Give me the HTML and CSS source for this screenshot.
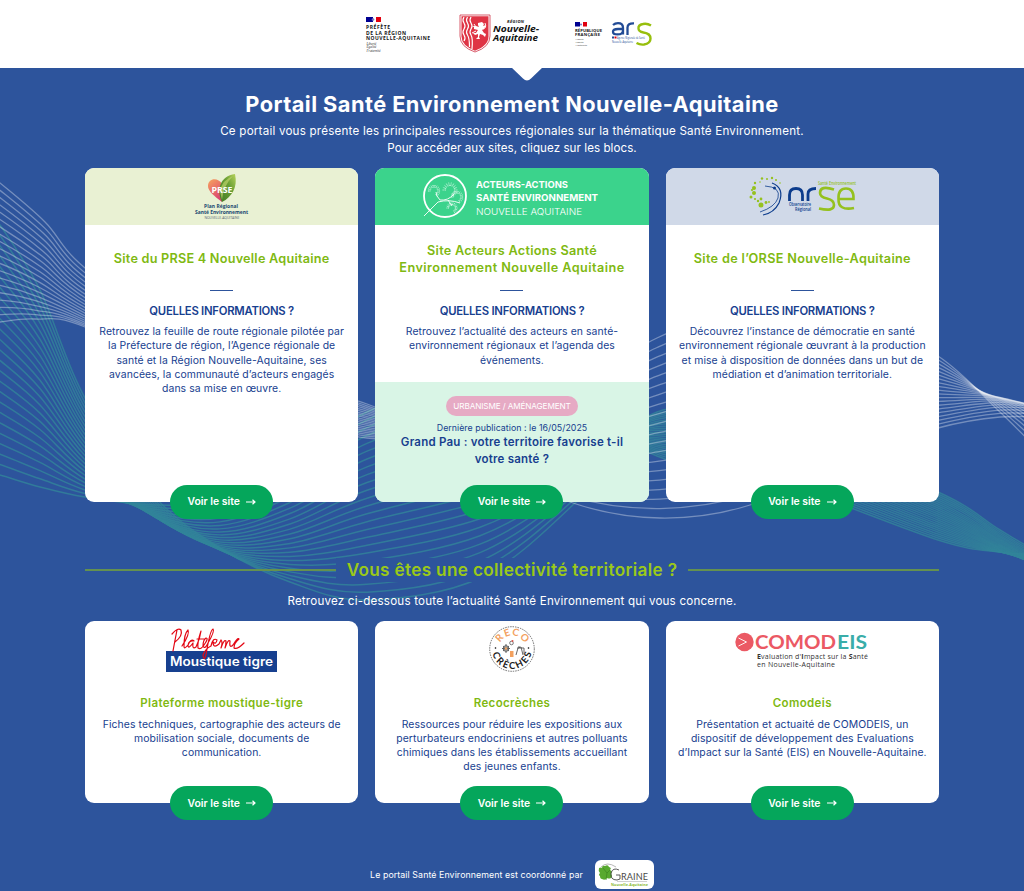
FILE: index.html
```html
<!DOCTYPE html>
<html lang="fr">
<head>
<meta charset="utf-8">
<title>Portail Santé Environnement Nouvelle-Aquitaine</title>
<link rel="stylesheet" href="styles.css">
</head>
<body>
<svg class="waves" viewBox="0 0 1024 891" aria-hidden="true"><g id="waves-teal"></g><g id="waves-white"></g></svg>
<header class="top">
<svg class="partners" viewBox="352 0 320 68" role="img">
  <path fill="#000091" d="M366 17h7v5h-7z"/><path fill="#e1000f" d="M376 17h5v5h-5z"/><circle cx="373" cy="19.5" r="1.3" fill="#7777c5"/>
  <g class="marianne"><text x="366" y="28.700" textLength="24">PRÉFÈTE</text><text x="366" y="34.700" textLength="40">DE LA RÉGION</text><text x="366" y="40.200" textLength="64">NOUVELLE-AQUITAINE</text></g>
  <g class="motto"><text x="366.5" y="44.5">Liberté</text><text x="366.5" y="48.2">Égalité</text><text x="366.5" y="51.8">Fraternité</text></g>
  <path d="M460 15h30v21q0 11-15 16q-15-5-15-16z" fill="#fff" stroke="#cf3347" stroke-width=".8"/>
  <path d="M461.5 16.3h27v20q0 9.5-13.5 14.4q-13.500-5-13.500-14.400z" fill="#df3445"/>
  <path d="M464 17q-2 3 0 6t0 6t0 6t0 6M467.500 17q-2 3 0 6t0 6t0 6t2 12M471 17q-2 3 0 6t0 6t0 6t1 14" fill="none" stroke="#fff" stroke-width="1.200"/>
  <path d="M478 23l4-1 2 2-1 2 3-1-2 4-2 1 2 3 2 1-1 3-2-2-3-1-1 3 1 2-4 0 2-2 0-3-3 1-2-2 3 0 2-3-4-1 0-2-2-1 4 0 3 1-1-2z" fill="#fff"/><path d="M483 29q4-1 2-6M476 27l-2-3m2 7-4 2" stroke="#fff" fill="none"/>
  <g class="region"><text x="507" y="23.300" class="region-top" textLength="17">RÉGION</text><text x="493" y="31.500" textLength="46" lengthAdjust="spacingAndGlyphs">Nouvelle-</text><text x="493" y="40.800" textLength="45" lengthAdjust="spacingAndGlyphs">Aquitaine</text></g>
  <path fill="#000091" d="M575 22h5v4.500h-5z"/><path fill="#e1000f" d="M583 22h4v4.500h-4z"/><circle cx="581" cy="24.500" r="1" fill="#7777c5"/>
  <g class="marianne small"><text x="575" y="31.600" textLength="27">RÉPUBLIQUE</text><text x="575" y="36" textLength="25">FRANÇAISE</text></g>
  <g class="motto tiny"><text x="575.500" y="40">Liberté</text><text x="575.500" y="43">Égalité</text><text x="575.500" y="46">Fraternité</text></g>
  <g fill="none" stroke="#224b96" stroke-width="2.300"><path d="M613 25q2-1.800 5-1.800q5 0 5 4.500v6.800M623 29h-5q-5 0-5 2.700t4.500 2.700q5.500 0 5.500-4M627.500 35v-7.500q0-4.500 6.500-4.200"/></g>
  <path d="M651 25.500q-4-2.500-8-1.500q-5 1-4.500 4.500q0 3 5 4q7 1 7 6t-6.500 6q-4 .5-7.500-1.500" fill="none" stroke="#97bf0d" stroke-width="2.400"/>
  <path fill="#224b96" d="M612 36.500h2v2h-2z"/><path fill="#e1000f" d="M614.500 36.500h2v2h-2z"/>
  <g class="ars"><text x="617" y="38.500" textLength="28" lengthAdjust="spacingAndGlyphs">Agence Régionale de Santé</text><text x="612" y="42.700" textLength="21" lengthAdjust="spacingAndGlyphs">Nouvelle-Aquitaine</text></g>
</svg>
<svg class="notch" viewBox="0 0 32 14"><path d="M0 0H32L20 11.500Q16 15.500 12 11.500Z" fill="#fff"/></svg>
</header>
<main class="wrap">
<h1>Portail Santé Environnement Nouvelle-Aquitaine</h1>
<p class="intro"><span class="intro-a">Ce portail vous présente les principales ressources régionales sur la thématique Santé Environnement.</span><br><span class="intro-b">Pour accéder aux sites, cliquez sur les blocs.</span></p>
<section class="grid">
 <article class="card tall">
  <div class="banner prse"><svg class="logo" viewBox="175 168 94 57"><defs><linearGradient id="heart" x2=".5" y2="1"><stop stop-color="#f7a45e"/><stop offset="1" stop-color="#db4371"/></linearGradient><linearGradient id="leaf" x1="1" x2="0" y2="1"><stop stop-color="#b7d45b"/><stop offset=".4" stop-color="#6b9f35"/><stop offset="1" stop-color="#3f7a25"/></linearGradient></defs><path d="M222 202C214 196 208 191 208 186C208 178 218 177 222 184Z" fill="url(#heart)"/><path d="M222 202C216 190 220 176 235 174C238 187 232 197 222 202Z" fill="url(#leaf)"/><path d="M222 200Q223 186 233 176Q222 180 220 191Z" fill="#bad26a" opacity=".7"/><text x="211.500" y="193" textLength="21" lengthAdjust="spacingAndGlyphs" class="prse-mark">PRSE</text><g class="prse-name"><text x="204" y="208.300" textLength="34">Plan Régional</text><text x="195" y="214" textLength="53">Santé Environnement</text></g><text x="204.500" y="218.700" textLength="35" class="prse-sub">NOUVELLE-AQUITAINE</text></svg></div>
  <div class="body"><h2 class="single t1">Site du PRSE 4 Nouvelle Aquitaine</h2><hr><h3>QUELLES INFORMATIONS ?</h3>
  <p>Retrouvez la feuille de route régionale pilotée par<br>la Préfecture de région, l’Agence régionale de<br>santé et la Région Nouvelle-Aquitaine, ses<br>avancées, la communauté d’acteurs engagés<br>dans sa mise en œuvre.</p></div>
  <a class="btn">Voir le site <svg viewBox="0 0 10 8"><path d="M0 4H9M6.500 1.700L9 4L6.500 6.300"/></svg></a>
 </article>
 <article class="card tall">
  <div class="banner acteurs"><svg class="logo wide" viewBox="412 168 200 57"><circle cx="445" cy="196" r="21" fill="none" stroke="#fff" stroke-width="1.800"/><path d="M424 216L438 202M438 202Q449 199 460 203M440 200Q436 196 436 192M440 200Q448 201 454 194M448 200L452 206" fill="none" stroke="#fff" stroke-width=".9"/><g id="umbels"></g><g class="aa"><text x="476" y="188" textLength="92" lengthAdjust="spacingAndGlyphs">ACTEURS-ACTIONS</text><text x="476" y="201.300" textLength="122" lengthAdjust="spacingAndGlyphs">SANTÉ ENVIRONNEMENT</text><text x="476" y="214.700" textLength="106" lengthAdjust="spacingAndGlyphs" class="light">NOUVELLE AQUITAINE</text></g></svg></div>
  <div class="body"><h2><span class="t2">Site Acteurs Actions Santé</span><br><span class="t3">Environnement Nouvelle Aquitaine</span></h2><hr><h3>QUELLES INFORMATIONS ?</h3>
  <p>Retrouvez l’actualité des acteurs en santé-<br>environnement régionaux et l’agenda des<br>événements.</p></div>
  <div class="news"><span class="tag">URBANISME / AMÉNAGEMENT</span><span class="date">Dernière publication : le 16/05/2025</span><strong>Grand Pau : votre territoire favorise t-il<br>votre santé ?</strong></div>
  <a class="btn">Voir le site <svg viewBox="0 0 10 8"><path d="M0 4H9M6.500 1.700L9 4L6.500 6.300"/></svg></a>
 </article>
 <article class="card tall">
  <div class="banner orse"><svg class="logo wide" viewBox="702 168 200 57"><g fill="#95c11f"><circle cx="761" cy="199" r="1.400"/><circle cx="754" cy="193" r="2"/><circle cx="751" cy="197" r="1.500"/><circle cx="754" cy="188" r="2"/><circle cx="755" cy="183" r="1.200"/><circle cx="762" cy="178.500" r="1.200"/><circle cx="767" cy="179" r="1"/><circle cx="772" cy="178" r="1.200"/><circle cx="776" cy="180" r="1"/><circle cx="760" cy="182" r=".8"/><circle cx="766" cy="202.500" r="1.400"/><circle cx="769" cy="202" r=".9"/><circle cx="761" cy="205" r="2.500"/><circle cx="755" cy="199" r="1.100"/><circle cx="758" cy="201" r="1.200"/><circle cx="752" cy="190" r="1.100"/><circle cx="780" cy="183" r=".8"/></g><g fill="none" stroke="#0c3c8c"><path d="M765 186Q781 187 778 198Q775 207 760 212" stroke-width=".8"/><path d="M772 183Q785 188 779 203Q774 213 763 215" stroke-width="1.200"/></g><path d="M789.500 201V195Q789.500 188.500 796 188.500T802.500 195V201M808 201V194Q808 188.500 816 188.500" fill="none" stroke="#0c3c8c" stroke-width="2.800"/><circle cx="774.500" cy="188" r="1.500" fill="#0c3c8c"/><g fill="none" stroke="#95c11f" stroke-width="2.600"><path d="M834 189.500Q820 185 820 193Q820 197 827 198.500T834 205Q834 212 819 208.500M838.500 199H853.500Q854 188.500 846 188.500T838.500 199Q838 211 854 208"/></g><g class="orse-name"><text x="789" y="205.500" textLength="22" lengthAdjust="spacingAndGlyphs">Observatoire</text><text x="795" y="211.300" textLength="16" lengthAdjust="spacingAndGlyphs">Régional</text><text x="818" y="185" textLength="38" lengthAdjust="spacingAndGlyphs" class="orse-green">Santé Environnement</text></g></svg></div>
  <div class="body"><h2 class="single t4">Site de l’ORSE Nouvelle-Aquitaine</h2><hr><h3>QUELLES INFORMATIONS ?</h3>
  <p>Découvrez l’instance de démocratie en santé<br>environnement régionale œuvrant à la production<br>et mise à disposition de données dans un but de<br>médiation et d’animation territoriale.</p></div>
  <a class="btn">Voir le site <svg viewBox="0 0 10 8"><path d="M0 4H9M6.500 1.700L9 4L6.500 6.300"/></svg></a>
 </article>
</section>
<div class="divider"><i></i><h2 class="section-title">Vous êtes une collectivité territoriale ?</h2><i></i></div>
<p class="lead">Retrouvez ci-dessous toute l’actualité Santé Environnement qui vous concerne.</p>
<section class="grid">
 <article class="card short">
  <svg class="logo short-logo" viewBox="152 621 140 57"><path d="M166 651h111v21H166z" fill="#17408f"/><text x="170" y="666" textLength="103" lengthAdjust="spacingAndGlyphs" class="tigre">Moustique tigre</text><path d="M172 634Q178 627 181 630Q183 636 175 642M177 630Q175 640 173 651M182 646Q190 634 188 630Q184 634 184 646Q184 650 188 645Q191 638 194 641Q189 640 188 645Q188 650 193 643Q192 650 196 647Q200 639 201 631Q197 643 198 648Q201 650 204 645Q209 638 206 638Q203 640 203 646Q205 650 208 643Q215 631 213 629Q210 630 206 655Q204 662 203 655Q205 649 211 646Q213 637 217 640Q216 645 213 642Q213 649 219 644L221 640Q223 642 221 648Q224 639 226 641Q226 645 225 648Q228 639 230 641Q229 649 233 645Q238 637 239 639Q234 643 234 648Q237 650 244 643M197 639H204" fill="none" stroke="#e30613" stroke-width="1.200" stroke-linecap="round" stroke-linejoin="round"/></svg>
  <h2>Plateforme moustique-tigre</h2><p>Fiches techniques, cartographie des acteurs de<br>mobilisation sociale, documents de<br>communication.</p>
  <a class="btn">Voir le site <svg viewBox="0 0 10 8"><path d="M0 4H9M6.500 1.700L9 4L6.500 6.300"/></svg></a>
 </article>
 <article class="card short">
  <svg class="logo short-logo" viewBox="442 621 140 57"><circle cx="512" cy="649" r="22.300" fill="none" stroke="#333" stroke-width=".7" stroke-dasharray="1.500 1"/><path id="arcTop" d="M498.500 649A13.500 13.500 0 0 1 525.500 649" fill="none"/><path id="arcBottom" d="M492 649A20 20 0 0 0 532 649" fill="none"/><text class="reco orange"><textPath href="#arcTop" startOffset="6.500" textLength="30">RECO</textPath></text><text class="reco"><textPath href="#arcBottom" startOffset="4.500" textLength="54">CRÈCHES</textPath></text><g fill="none" stroke="#555" stroke-width=".9"><circle cx="506" cy="648.500" r="2.800"/><path d="M502 648.500h8M506 644v9M503 646l6 5M509 646l-6 5M516 655l2-7 3-1 2 8M517 648h7M524 648v6M519 648v-2"/></g><path d="M510 651h3.500v6h-3.500z" fill="#f3a15f"/><circle cx="511.500" cy="643" r="1.800" fill="none" stroke="#444" stroke-width=".7"/><circle cx="512.500" cy="641" r="1" fill="#d95349"/><circle cx="506" cy="648.500" r="1.200" fill="#f3a15f"/><circle cx="495.500" cy="648" r=".8"/><circle cx="528.500" cy="648" r=".8"/></svg>
  <h2>Recocrèches</h2><p>Ressources pour réduire les expositions aux<br>perturbateurs endocriniens et autres polluants<br>chimiques dans les établissements accueillant<br>des jeunes enfants.</p>
  <a class="btn">Voir le site <svg viewBox="0 0 10 8"><path d="M0 4H9M6.500 1.700L9 4L6.500 6.300"/></svg></a>
 </article>
 <article class="card short">
  <svg class="logo short-logo" viewBox="732 621 140 57"><circle cx="744.500" cy="642" r="9.200" fill="#eb5964"/><path d="M738.500 638l8 4-8 4" fill="none" stroke="#fff" stroke-width=".9"/><g class="comodeis"><text x="755" y="649" textLength="81" lengthAdjust="spacingAndGlyphs" fill="#eb5964">COMOD</text><text x="837" y="649" textLength="30" lengthAdjust="spacingAndGlyphs" fill="#3aada9">EIS</text></g><g class="como-sub"><text x="757" y="659" textLength="111"><tspan class="b">E</tspan>valuation d'<tspan class="b">I</tspan>mpact sur la <tspan class="b">S</tspan>anté</text><text x="757" y="666.900" textLength="78">en Nouvelle-Aquitaine</text></g></svg>
  <h2>Comodeis</h2><p>Présentation et actuaité de COMODEIS, un<br>dispositif de développement des Evaluations<br>d’Impact sur la Santé (EIS) en Nouvelle-Aquitaine.</p>
  <a class="btn">Voir le site <svg viewBox="0 0 10 8"><path d="M0 4H9M6.500 1.700L9 4L6.500 6.300"/></svg></a>
 </article>
</section>
</main>
<footer><span>Le portail Santé Environnement est coordonné par</span>
<svg class="graine" viewBox="595 860 59 29"><rect x="595" y="860" width="59" height="29" rx="6" fill="#fff"/><path d="M601 867Q607 861 616 867" fill="none" stroke="#888" stroke-width=".6"/><path d="M599 868q2-1 3 0q0-3 3-2q3-2 4 1q3 1 1 3q3 1 1 4q2 2 0 4q-2 1-4 0q-2 3-5 1q-2 0-2-3q-2-1 0-3q-2-2-1-5z" fill="#58a92f"/><path d="M603 868l4 5-1 7M607 873l3-3" fill="none" stroke="#3c861f" stroke-width=".7"/><path d="M619 870Q613 867 611 873Q610 880 617 880L620 879V875H616" fill="none" stroke="#4a4a49" stroke-width=".9"/><text x="621" y="879.500" class="g-name" textLength="27" lengthAdjust="spacingAndGlyphs">RAINE</text><path d="M617 881.500h30" stroke="#888" stroke-width=".4"/><text x="611" y="886.300" class="g-sub" textLength="37" lengthAdjust="spacingAndGlyphs">Nouvelle-Aquitaine</text></svg></footer>
<script src="waves.js"></script>
</body>
</html>
```
FILE: styles.css
```css
*{box-sizing:border-box}
body{margin:0;width:1024px;height:891px;overflow:hidden;position:relative;background:#2d549c;color:#fff;font-family:Inter,"Open Sans",sans-serif;text-align:center}
.waves{position:absolute;inset:0;width:1024px;height:891px;z-index:-1;fill:none}
#waves-white{stroke:#fff;stroke-opacity:.34;stroke-width:1.3}
#waves-teal{stroke:#32849a;stroke-opacity:.8;stroke-width:1.5}
h1,h2,h3,p{margin:0}
.top{height:68px;background:#fff;position:relative;display:flex;justify-content:center}
.partners{width:320px;height:68px;display:block}
.notch{position:absolute;left:511px;top:67px;width:32px;height:14px}
.marianne{font:700 5px "Open Sans",sans-serif;fill:#161616}
.marianne.small{font-size:4.200px}
.motto{font:italic 3.400px "Liberation Serif",serif;fill:#333}
.motto.tiny{font-size:2.800px}
.region{font:italic 700 9.200px "Open Sans",sans-serif;fill:#111}
.region-top{font-size:4.200px}
.ars{font:3px "Open Sans",sans-serif;fill:#224b96}
.wrap{width:854px;margin:0 auto}
h1{padding-top:22px;font-size:21.800px;line-height:28px;font-weight:700;letter-spacing:.44px;white-space:nowrap}
.intro{margin-top:5px;font-size:11.600px;line-height:17px;height:45px;white-space:nowrap}
.intro-a{letter-spacing:.22px}.intro-b{letter-spacing:.06px}
.grid{display:grid;grid-template-columns:repeat(3,1fr);gap:17px}
.card{position:relative;background:#fff;border-radius:9px;color:#17408f;display:flex;flex-direction:column;align-items:stretch}
.tall{height:333.500px}
.short{height:182px}
.banner{height:57px;border-radius:9px 9px 0 0;display:flex;justify-content:center}
.prse{background:#e9f1d3}.acteurs{background:#3bd38c}.orse{background:#d0d9e8}
.logo{display:block;width:94px;height:57px}
.logo.wide{width:200px}
.logo.short-logo{width:140px;align-self:center}
.body h2{height:34px;margin-top:17px;font-size:12.700px;line-height:17px;font-weight:600;color:#7fb912;white-space:nowrap}
.body h2.single{line-height:34px}
.t1{letter-spacing:.22px}.t2{letter-spacing:.27px}.t3{letter-spacing:.43px}.t4{letter-spacing:.32px}
hr{width:23px;height:1px;border:0;background:#2d549c;margin:14px auto 0}
h3{margin-top:12px;font-size:11.300px;line-height:17px;font-weight:600;letter-spacing:-.24px}
.card p{font-size:10.400px;line-height:14.250px;letter-spacing:.09px;white-space:nowrap}
.body p{margin-top:5px}
.btn{position:absolute;left:50%;bottom:-17px;width:103px;height:34px;margin-left:-51.500px;border-radius:17px;background:#05a65b;color:#fff;display:flex;align-items:center;justify-content:center;gap:6px;font-size:10.400px;font-weight:600;white-space:nowrap}
.btn svg{width:10px;height:8px;fill:none;stroke:#fff;stroke-width:1.200}
.news{margin-top:auto;height:119.500px;padding-top:14px;background:#d9f5e6;border-radius:0 0 9px 9px;display:flex;flex-direction:column;align-items:center}
.tag{width:132px;height:20px;border-radius:10px;background:#e6aac4;color:#fff;font-size:8.200px;letter-spacing:-.12px;line-height:20px;white-space:nowrap}
.date{font-size:8.800px;line-height:14px;margin-top:4.500px;letter-spacing:.04px;white-space:nowrap}
.news strong{font-size:11.500px;line-height:17px;font-weight:600;letter-spacing:.22px;margin-top:-.5px;white-space:nowrap}
.divider{display:flex;align-items:center;height:24px;margin-top:56.500px}
.divider i{flex:1;height:2px;background:#64914f}
.section-title{width:352px;background:#2d549c;color:#9bc918;font-size:17.200px;line-height:24px;font-weight:600;letter-spacing:.32px;white-space:nowrap}
.lead{font-size:11.600px;line-height:18px;margin-top:10px;margin-bottom:11px;letter-spacing:.21px;white-space:nowrap}
.short h2{font-size:11.500px;line-height:17px;font-weight:600;color:#7fb912;margin-top:17px;letter-spacing:.37px}
.short p{margin-top:5.500px}
footer{height:29px;margin-top:57px;display:flex;align-items:center;justify-content:center;gap:12px;font-size:8.800px;letter-spacing:.09px;white-space:nowrap}
.graine{width:59px;height:29px}
.prse-mark{font:700 8px "Open Sans",sans-serif;fill:#fff}
.prse-name{font:700 4.900px "Open Sans",sans-serif;fill:#184770}
.prse-sub{font:3.400px "Open Sans",sans-serif;fill:#567}
.aa{font:700 9.500px Inter,sans-serif;fill:#fff}
.aa .light{font-weight:300}
.orse-name{font:600 4.600px "Open Sans",sans-serif;fill:#0c3c8c}
.orse-green{fill:#95c11f}
.tigre{font:600 12.500px Inter,sans-serif;fill:#fff}
.reco{font:700 9.500px Lato,sans-serif;fill:#1c1c1c}
.reco.orange{font-size:10px;fill:#f3a15f}
.comodeis{font:700 19px Lato,sans-serif}
.como-sub{font:7px "Open Sans",sans-serif;fill:#333}
.como-sub .b{font-weight:700}
.g-name{font:8.500px Lato,sans-serif;fill:#4a4a49}
.g-sub{font:700 4.200px "Open Sans",sans-serif;fill:#88b92d}
```
FILE: waves.js
```js
const NS = 'http://www.w3.org/2000/svg';

// Smooth path through a list of points (Catmull-Rom to cubic Bézier).
function smooth(p) {
  let d = `M${p[0]}`;
  for (let i = 0; i < p.length - 1; i++) {
    const a = p[i - 1] || p[i], b = p[i], c = p[i + 1], e = p[i + 2] || c;
    d += `C${b[0] + (c[0] - a[0]) / 6} ${b[1] + (c[1] - a[1]) / 6} ${c[0] - (e[0] - b[0]) / 6} ${c[1] - (e[1] - b[1]) / 6} ${c}`;
  }
  return d;
}

// Ribbon of strands blended between two guide curves; bow bends the middle strands away.
function ribbon(id, first, last, bow, count) {
  const group = document.getElementById(id);
  for (let i = 0; i < count; i++) {
    const t = i / (count - 1);
    const path = document.createElementNS(NS, 'path');
    path.setAttribute('d', smooth(first.map((p, k) => [
      p[0] + (last[k][0] - p[0]) * t,
      p[1] + (last[k][1] - p[1]) * t + bow[k] * 4 * t * (1 - t)
    ])));
    group.append(path);
  }
}

ribbon('waves-white',
  [[-20,168],[0,183],[45,222],[90,272],[225,362],[367,404],[480,455],[570,502],[660,518],[750,505],[850,458],[938,428],[1000,417],[1050,418]],
  [[-20,326],[0,322],[35,319],[85,327],[225,395],[367,438],[480,425],[570,390],[657,338],[750,305],[850,312],[938,356],[1000,412],[1050,462]],
  [0,0,4,8,0,0,0,0,0,0,0,0,-17,-27], 20);

ribbon('waves-teal',
  [[-20,200],[0,225],[40,290],[85,398],[155,497],[220,548],[290,582],[367,600],[480,578],[575,503],[657,412],[780,430],[938,492],[1000,530],[1050,560]],
  [[-20,470],[0,475],[40,487],[85,497],[155,505],[220,500],[290,466],[367,412],[480,375],[575,400],[657,456],[780,483],[938,540],[1000,552],[1050,555]],
  [0,0,0,4,16,18,10,0,0,0,0,0,0,6,14], 25);

// Seed heads of the umbel emblem.
const umbels = document.getElementById('umbels');
for (const [x, y, r] of [[434,191,6.5],[450,190,7.5],[457,197,6.5],[452,208,5.5]]) {
  for (let a = 0; a < 13; a++) {
    const q = -Math.PI + a * Math.PI / 9;
    const path = document.createElementNS(NS, 'path');
    path.setAttribute('d', `M${x + Math.cos(q) * r * .55} ${y + Math.sin(q) * r * .55}L${x + Math.cos(q) * r} ${y + Math.sin(q) * r}`);
    path.setAttribute('stroke', '#fff');
    path.setAttribute('stroke-width', '.8');
    path.setAttribute('stroke-dasharray', '1 .5');
    umbels.append(path);
  }
}
```
